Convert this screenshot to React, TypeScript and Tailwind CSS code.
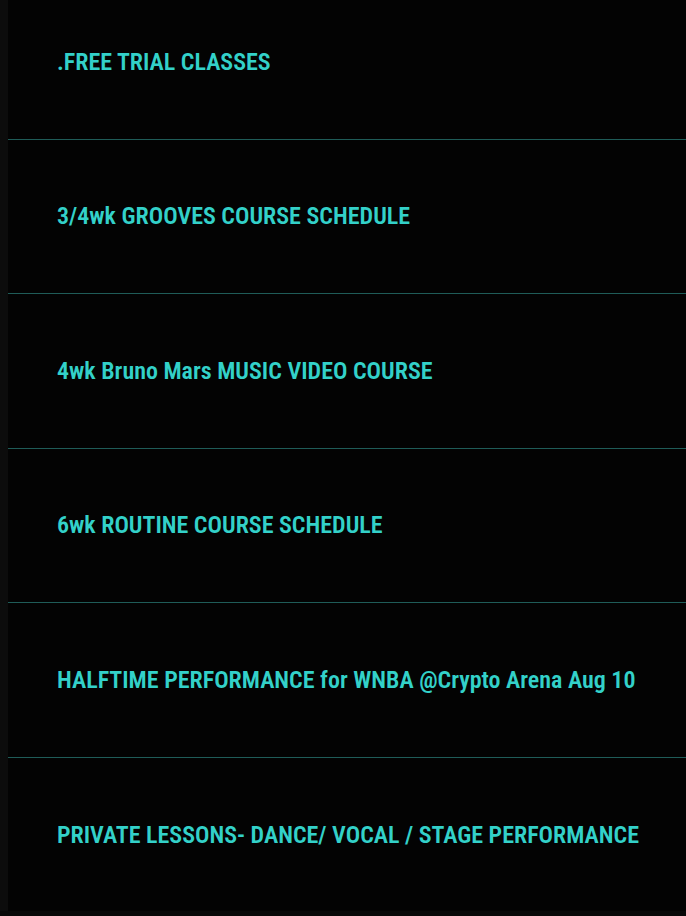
const items = [
  '.FREE TRIAL CLASSES',
  '3/4wk GROOVES COURSE SCHEDULE',
  '4wk Bruno Mars MUSIC VIDEO COURSE',
  '6wk ROUTINE COURSE SCHEDULE',
  'HALFTIME PERFORMANCE for WNBA @Crypto Arena Aug 10',
  'PRIVATE LESSONS- DANCE/ VOCAL / STAGE PERFORMANCE',
];

export default function App() {
  return (
    <div className="h-[916px] overflow-hidden bg-[#030303] flex flex-col">
      <div className="flex flex-1 min-h-0">
        <div className="w-2 shrink-0 bg-[#0c0c0c]" />
        <ul className="flex-1 -mt-[15px] font-['Roboto',sans-serif]">
          {items.map((t, i) => (
            <li
              key={t}
              className={`h-[154.5px] flex items-center pl-[49px] ${i < items.length - 1 ? 'border-b border-[#1f5c58]' : ''}`}
            >
              <a
                href="#"
                className="text-[24px] leading-none font-semibold text-[#33d1c9] whitespace-nowrap"
                style={{ fontStretch: '75%' }}
              >
                {t}
              </a>
            </li>
          ))}
        </ul>
      </div>
      <div className="h-[5px] shrink-0 bg-[#080808]" />
    </div>
  );
}
